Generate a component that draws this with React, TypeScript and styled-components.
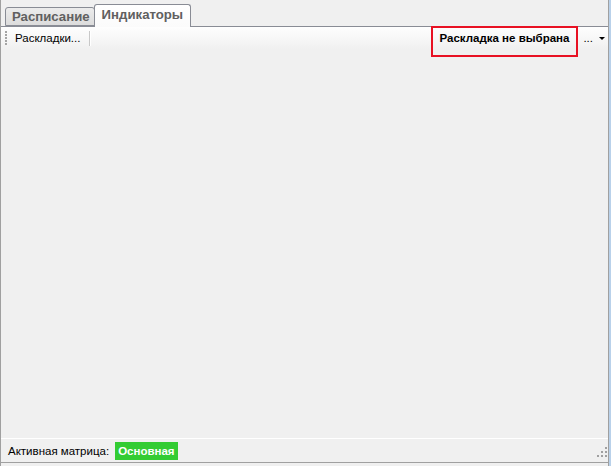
import React from "react";
import styled, { createGlobalStyle } from "styled-components";

const Global = createGlobalStyle`
  html, body { margin: 0; padding: 0; background: #f0f0f0; }
  body { font-family: "Liberation Sans", Arial, sans-serif; }
`;

const Window = styled.div`
  width: 611px;
  height: 466px;
  box-sizing: border-box;
  background: #f0f0f0;
  border-right: 2px solid #b9d1ea;
  display: flex;
`;

const Panel = styled.div`
  flex: 1;
  display: flex;
  flex-direction: column;
  border-left: 1px solid #a0a0a0;
  border-right: 1px solid #a0a0a0;
  padding-bottom: 3px;
`;

const TabStrip = styled.div`
  height: 26px;
  flex: none;
  display: flex;
  align-items: flex-end;
  padding-left: 4px;
  border-bottom: 1px solid #898c95;
`;

const Tab = styled.div<{ $active?: boolean }>`
  box-sizing: border-box;
  height: ${(p) => (p.$active ? "23px" : "19px")};
  margin-bottom: ${(p) => (p.$active ? "-1px" : "0")};
  margin-left: ${(p) => (p.$active ? "-1px" : "0")};
  padding: ${(p) => (p.$active ? "2px 7px 0 7px" : "1px 4px 0 6px")};
  border: 1px solid #898c95;
  border-bottom: ${(p) => (p.$active ? "none" : "1px solid #898c95")};
  border-radius: 3px 3px 0 0;
  background: ${(p) =>
    p.$active
      ? "linear-gradient(#ffffff, #fbfbfb)"
      : "linear-gradient(#ececec, #dcdcdc)"};
  color: #606060;
  font-weight: bold;
  font-size: 13.2px;
  line-height: 16px;
  white-space: nowrap;
  position: relative;
  z-index: ${(p) => (p.$active ? 1 : 0)};
`;

const Toolbar = styled.div`
  height: 22px;
  flex: none;
  display: flex;
  align-items: center;
  background: linear-gradient(#fefefe, #f6f6f6 60%, #f0f0f0);
  padding-left: 4px;
  font-size: 11.5px;
  line-height: 14px;
  color: #000;
`;

const Grip = styled.div`
  width: 2px;
  height: 15px;
  margin-right: 8px;
  background: repeating-linear-gradient(
    to bottom,
    #a4a4a4 0 2px,
    transparent 2px 3px
  );
`;

const ToolButton = styled.div`
  white-space: nowrap;
  padding-right: 9px;
`;

const Separator = styled.div`
  width: 1px;
  height: 15px;
  background: #c8c8c8;
  border-right: 1px solid #ffffff;
`;

const Spacer = styled.div`
  flex: 1;
`;

const LayoutLabel = styled.div`
  position: relative;
  font-weight: bold;
  white-space: nowrap;
  margin-right: 14px;
  &::after {
    content: "";
    position: absolute;
    box-sizing: border-box;
    left: -9px;
    right: -9px;
    top: -5px;
    height: 31px;
    border: 2px solid #e81123;
  }
`;

const More = styled.div`
  display: flex;
  align-items: center;
  gap: 6px;
  padding-right: 3px;
`;

const Arrow = styled.div`
  width: 0;
  height: 0;
  border-left: 3px solid transparent;
  border-right: 3px solid transparent;
  border-top: 3px solid #000;
`;

const Content = styled.div`
  flex: 1;
  background: #f0f0f0;
`;

const StatusBar = styled.div`
  height: 23px;
  flex: none;
  border-top: 1px solid #ffffff;
  border-bottom: 1px solid #a0a0a0;
  display: flex;
  align-items: center;
  padding-left: 7px;
  font-size: 11.5px;
  color: #000;
  position: relative;
`;

const StatusLabel = styled.span`
  margin-right: 6px;
`;

const Badge = styled.span`
  background: #33cc33;
  color: #ffffff;
  font-weight: bold;
  padding: 2px 3px;
  line-height: 14px;
`;

const ResizeGrip = styled.svg`
  position: absolute;
  right: 0;
  bottom: 4px;
`;

export default function App() {
  return (
    <>
      <Global />
      <Window>
        <Panel>
          <TabStrip>
            <Tab>Расписание</Tab>
            <Tab $active>Индикаторы</Tab>
          </TabStrip>
          <Toolbar>
            <Grip />
            <ToolButton>Раскладки...</ToolButton>
            <Separator />
            <Spacer />
            <LayoutLabel>Раскладка не выбрана</LayoutLabel>
            <More>
              <span>...</span>
              <Arrow />
            </More>
          </Toolbar>
          <Content />
          <StatusBar>
            <StatusLabel>Активная матрица:</StatusLabel>
            <Badge>Основная</Badge>
            <ResizeGrip width="11" height="11" viewBox="0 0 11 11">
              <rect x="8" y="0" width="2" height="2" fill="#a0a0a0" />
              <rect x="4" y="4" width="2" height="2" fill="#a0a0a0" />
              <rect x="8" y="4" width="2" height="2" fill="#a0a0a0" />
              <rect x="0" y="8" width="2" height="2" fill="#a0a0a0" />
              <rect x="4" y="8" width="2" height="2" fill="#a0a0a0" />
              <rect x="8" y="8" width="2" height="2" fill="#a0a0a0" />
            </ResizeGrip>
          </StatusBar>
        </Panel>
      </Window>
    </>
  );
}
